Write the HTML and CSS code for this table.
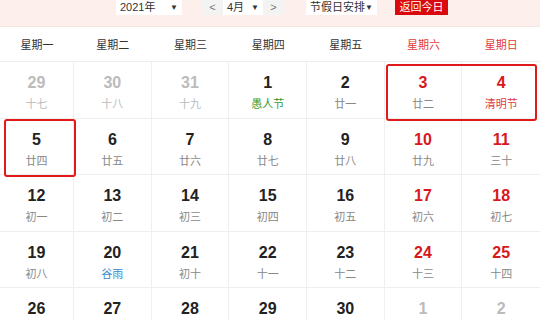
FILE: index.html
```html
<!DOCTYPE html>
<html lang="zh-CN">
<head>
<meta charset="utf-8">
<link rel="stylesheet" href="styles.css">
</head>
<body>
<div class="cal">
  <div class="bar">
    <div class="sel year"><span>2021年</span><span class="arr">▼</span></div>
    <div class="month">
      <span class="nav">&lt;</span>
      <span class="mid"><span>4月</span><span class="arr">▼</span></span>
      <span class="nav">&gt;</span>
    </div>
    <div class="sel hol"><span>节假日安排</span><span class="arr">▼</span></div>
    <div class="today">返回今日</div>
  </div>
  <div class="week">
    <div>星期一</div><div>星期二</div><div>星期三</div><div>星期四</div><div>星期五</div><div class="we">星期六</div><div class="we">星期日</div>
  </div>
  <div class="gridwrap">
    <div class="grid">
      <div class="c other"><b>29</b><i>十七</i></div>
      <div class="c other"><b>30</b><i>十八</i></div>
      <div class="c other"><b>31</b><i>十九</i></div>
      <div class="c"><b>1</b><i class="green">愚人节</i></div>
      <div class="c"><b>2</b><i>廿一</i></div>
      <div class="c red"><b>3</b><i>廿二</i></div>
      <div class="c red"><b>4</b><i class="fest">清明节</i></div>

      <div class="c"><b>5</b><i>廿四</i></div>
      <div class="c"><b>6</b><i>廿五</i></div>
      <div class="c"><b>7</b><i>廿六</i></div>
      <div class="c"><b>8</b><i>廿七</i></div>
      <div class="c"><b>9</b><i>廿八</i></div>
      <div class="c red"><b>10</b><i>廿九</i></div>
      <div class="c red"><b>11</b><i>三十</i></div>

      <div class="c"><b>12</b><i>初一</i></div>
      <div class="c"><b>13</b><i>初二</i></div>
      <div class="c"><b>14</b><i>初三</i></div>
      <div class="c"><b>15</b><i>初四</i></div>
      <div class="c"><b>16</b><i>初五</i></div>
      <div class="c red"><b>17</b><i>初六</i></div>
      <div class="c red"><b>18</b><i>初七</i></div>

      <div class="c"><b>19</b><i>初八</i></div>
      <div class="c"><b>20</b><i class="blue">谷雨</i></div>
      <div class="c"><b>21</b><i>初十</i></div>
      <div class="c"><b>22</b><i>十一</i></div>
      <div class="c"><b>23</b><i>十二</i></div>
      <div class="c red"><b>24</b><i>十三</i></div>
      <div class="c red"><b>25</b><i>十四</i></div>

      <div class="c"><b>26</b><i>十五</i></div>
      <div class="c"><b>27</b><i>十六</i></div>
      <div class="c"><b>28</b><i>十七</i></div>
      <div class="c"><b>29</b><i>十八</i></div>
      <div class="c"><b>30</b><i>十九</i></div>
      <div class="c other"><b>1</b><i>二十</i></div>
      <div class="c other"><b>2</b><i>廿一</i></div>
    </div>
    <div class="mark m1"></div>
    <div class="mark m2"></div>
  </div>
</div>
</body>
</html>
```

FILE: styles.css
```css
* { box-sizing: border-box; }
html, body { margin: 0; padding: 0; }
body {
  width: 540px;
  height: 320px;
  overflow: hidden;
  background: #fff;
  font-family: "Liberation Sans", "Noto Sans CJK SC", sans-serif;
  color: #222;
}
.cal { width: 540px; }
.bar {
  height: 27px;
  background: #fcefec;
  border-bottom: 1px solid #f6e4e0;
  display: flex;
  align-items: flex-start;
  padding-left: 116px;
  font-size: 11px;
  line-height: 15px;
}
.sel {
  height: 15px;
  background: #fff;
  display: flex;
  justify-content: space-between;
  padding: 0 4px;
  color: #333;
}
.year { width: 66px; }
.hol { width: 71px; margin-left: 22px; }
.arr { font-size: 8px; }
.month {
  width: 82px;
  height: 15px;
  margin-left: 20px;
  display: flex;
  color: #555;
}
.nav {
  width: 21px;
  background: #f3f3f3;
  text-align: center;
  color: #777;
}
.mid {
  flex: 1;
  background: #fff;
  display: flex;
  justify-content: space-between;
  padding: 0 4px;
  color: #333;
}
.today {
  margin-left: 18px;
  width: 53px;
  height: 15px;
  background: #d9090c;
  color: #fff;
  text-align: center;
}
.week {
  height: 35px;
  display: grid;
  grid-template-columns: 74px repeat(6, 1fr);
  align-items: center;
  text-align: center;
  font-size: 11px;
  color: #333;
  border-bottom: 1px solid #f2eceb;
}
.week .we { color: #e23a3a; }
.gridwrap { position: relative; }
.grid {
  display: grid;
  grid-template-columns: 74px repeat(6, 1fr);
  grid-auto-rows: 56.5px;
}
.c {
  border-right: 1px solid #efefef;
  border-bottom: 1px solid #efefef;
  display: flex;
  flex-direction: column;
  align-items: center;
  padding-top: 12px;
}
.c:nth-child(7n) { border-right: none; }
.c b {
  font-size: 16px;
  line-height: 18px;
  font-weight: bold;
  color: #222;
}
.c i {
  font-style: normal;
  font-size: 11px;
  line-height: 14px;
  margin-top: 5px;
  color: #888;
}
.c.red b { color: #d7191c; }
.c.other b { color: #bbb; }
.c.other i { color: #bbb; }
.c i.green { color: #2f9a2f; }
.c i.blue { color: #3b8ccc; }
.c i.fest { color: #e0393b; }
.mark {
  position: absolute;
  border: 2px solid #e0191b;
  border-radius: 3px;
  pointer-events: none;
}
.m1 { left: 386px; top: 2px; width: 151px; height: 57px; }
.m2 { left: 4px; top: 57px; width: 72px; height: 58px; }
```
